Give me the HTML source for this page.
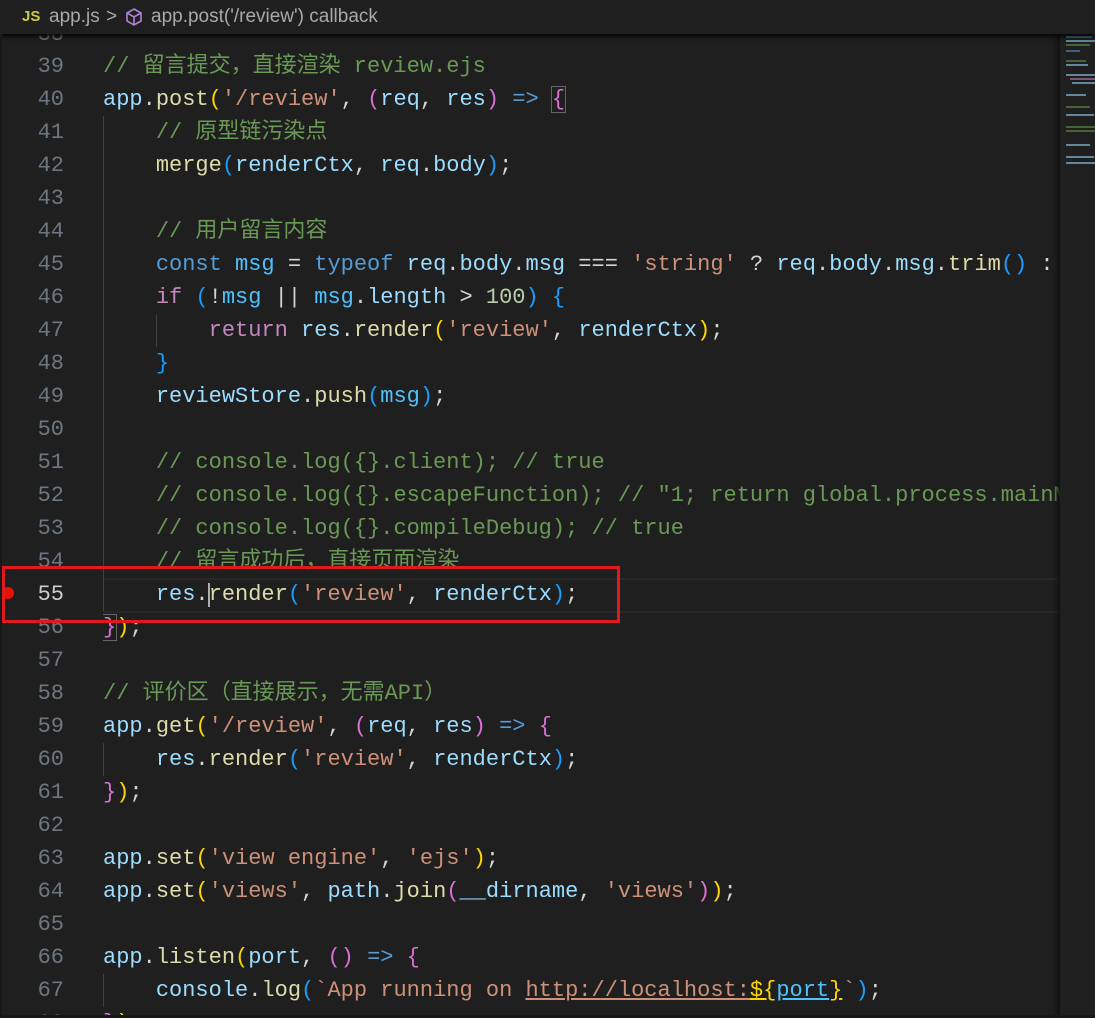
<!DOCTYPE html>
<html><head><meta charset="utf-8"><style>
html,body{margin:0;padding:0;background:#1f1f1f;width:1095px;height:1018px;overflow:hidden;}
body{position:relative;font-family:"Liberation Mono","Noto Sans CJK SC",monospace;}
.bc{position:absolute;left:0;top:0;width:1095px;height:34px;background:#1f1f1f;box-shadow:0 2px 5px #000;z-index:3;font-family:"Liberation Sans",sans-serif;font-size:19px;color:#a9a9a9;}
.bc span{position:absolute;top:6px;}
.w{position:absolute;left:0;top:2px;width:1095px;height:1016px;}
.ln{position:absolute;left:0;width:64px;text-align:right;font-size:22px;color:#6e7681;height:33px;line-height:33px;}
.cd{position:absolute;left:103px;font-size:22px;height:33px;line-height:33px;white-space:pre;color:#d4d4d4;width:957px;overflow:hidden;}
.c{color:#6a9955}.k{color:#569cd6}.p{color:#c586c0}.f{color:#dcdcaa}.v{color:#9cdcfe}.s{color:#ce9178}.n{color:#b5cea8}.o{color:#4fc1ff}
.b1{color:#ffd700}.b2{color:#da70d6}.b3{color:#179fff}
.g{position:absolute;width:1px;background:#404040;}
.mm{position:absolute;left:1060px;top:34px;width:35px;height:984px;background:#1f1f1f;box-shadow:-3px 0 5px #111;z-index:2}
</style></head><body>
<div class="bc"><span style="left:22px;top:8px;color:#cbcb41;font-weight:bold;font-size:15px">JS</span><span style="left:49px;">app.js</span><span style="left:106px;">&gt;</span>
<svg style="position:absolute;left:124px;top:7px" width="20" height="20" viewBox="0 0 20 20"><path d="M10 2 L17 6 L17 14 L10 18 L3 14 L3 6 Z M3 6 L10 10 L17 6 M10 10 L10 18" fill="none" stroke="#b180d7" stroke-width="1.6"/></svg>
<span style="left:151px;">app.post('/review') callback</span></div>
<div class="mm">
<svg width="35" height="140" style="position:absolute;left:6px;top:0"><g opacity="0.55"><rect x="0" y="2" width="26" height="2" fill="#569cd6"/><rect x="0" y="6" width="29" height="2" fill="#9cdcfe"/><rect x="0" y="10" width="24" height="2" fill="#6a9955"/><rect x="0" y="16" width="14" height="2" fill="#569cd6"/><rect x="0" y="26" width="20" height="2" fill="#6a9955"/><rect x="0" y="30" width="22" height="2" fill="#9cdcfe"/><rect x="0" y="40" width="29" height="2" fill="#9cdcfe"/><rect x="4" y="44" width="25" height="2" fill="#c586c0"/><rect x="6" y="48" width="23" height="2" fill="#9cdcfe"/><rect x="0" y="60" width="20" height="2" fill="#9cdcfe"/><rect x="0" y="72" width="24" height="2" fill="#6a9955"/><rect x="0" y="80" width="28" height="2" fill="#9cdcfe"/><rect x="0" y="92" width="29" height="2" fill="#6a9955"/><rect x="0" y="96" width="29" height="2" fill="#6a9955"/><rect x="0" y="110" width="24" height="2" fill="#9cdcfe"/><rect x="0" y="122" width="28" height="2" fill="#9cdcfe"/><rect x="0" y="128" width="29" height="2" fill="#9cdcfe"/></g></svg>
</div>
<div class="w">
<div class="ln" style="top:16px">38</div>
<div class="ln" style="top:48px">39</div><div class="cd" style="top:48px"><span class="c">// 留言提交，直接渲染 review.ejs</span></div>
<div class="ln" style="top:81px">40</div><div class="cd" style="top:81px"><span class="v">app</span>.<span class="f">post</span><span class="b1">(</span><span class="s">'/review'</span>, <span class="b2">(</span><span class="v">req</span>, <span class="v">res</span><span class="b2">)</span> <span class="k">=&gt;</span> <span class="b2" style="outline:1px solid #666">{</span></div>
<div class="ln" style="top:114px">41</div><div class="cd" style="top:114px">    <span class="c">// 原型链污染点</span></div>
<div class="ln" style="top:147px">42</div><div class="cd" style="top:147px">    <span class="f">merge</span><span class="b3">(</span><span class="v">renderCtx</span>, <span class="v">req</span>.<span class="v">body</span><span class="b3">)</span>;</div>
<div class="ln" style="top:180px">43</div>
<div class="ln" style="top:213px">44</div><div class="cd" style="top:213px">    <span class="c">// 用户留言内容</span></div>
<div class="ln" style="top:246px">45</div><div class="cd" style="top:246px">    <span class="k">const</span> <span class="o">msg</span> = <span class="k">typeof</span> <span class="v">req</span>.<span class="v">body</span>.<span class="v">msg</span> === <span class="s">'string'</span> ? <span class="v">req</span>.<span class="v">body</span>.<span class="v">msg</span>.<span class="f">trim</span><span class="b3">()</span> : <span class="s">''</span>;</div>
<div class="ln" style="top:279px">46</div><div class="cd" style="top:279px">    <span class="p">if</span> <span class="b3">(</span>!<span class="o">msg</span> || <span class="o">msg</span>.<span class="v">length</span> &gt; <span class="n">100</span><span class="b3">)</span> <span class="b3">{</span></div>
<div class="ln" style="top:312px">47</div><div class="cd" style="top:312px">        <span class="p">return</span> <span class="v">res</span>.<span class="f">render</span><span class="b1">(</span><span class="s">'review'</span>, <span class="v">renderCtx</span><span class="b1">)</span>;</div>
<div class="ln" style="top:345px">48</div><div class="cd" style="top:345px">    <span class="b3">}</span></div>
<div class="ln" style="top:378px">49</div><div class="cd" style="top:378px">    <span class="v">reviewStore</span>.<span class="f">push</span><span class="b3">(</span><span class="o">msg</span><span class="b3">)</span>;</div>
<div class="ln" style="top:411px">50</div>
<div class="ln" style="top:444px">51</div><div class="cd" style="top:444px">    <span class="c">// console.log({}.client); // true</span></div>
<div class="ln" style="top:477px">52</div><div class="cd" style="top:477px">    <span class="c">// console.log({}.escapeFunction); // "1; return global.process.mainModule</span></div>
<div class="ln" style="top:510px">53</div><div class="cd" style="top:510px">    <span class="c">// console.log({}.compileDebug); // true</span></div>
<div class="ln" style="top:543px">54</div><div class="cd" style="top:543px">    <span class="c">// 留言成功后，直接页面渲染</span></div>
<div style="position:absolute;left:103px;top:576px;width:957px;height:31px;border-top:2px solid #282828;border-bottom:2px solid #282828;"></div>
<div class="ln" style="top:576px;color:#cccccc">55</div><div class="cd" style="top:576px">    <span class="v">res</span>.<span class="f">render</span><span class="b3">(</span><span class="s">'review'</span>, <span class="v">renderCtx</span><span class="b3">)</span>;</div>
<div style="position:absolute;left:208px;top:581px;width:2px;height:24px;background:#aeafad"></div>
<div style="position:absolute;left:2px;top:585px;width:12px;height:12px;border-radius:50%;background:#e51400"></div>
<div class="ln" style="top:609px">56</div><div class="cd" style="top:609px"><span class="b2" style="outline:1px solid #666">}</span><span class="b1">)</span>;</div>
<div class="ln" style="top:642px">57</div>
<div class="ln" style="top:675px">58</div><div class="cd" style="top:675px"><span class="c">// 评价区（直接展示，无需API）</span></div>
<div class="ln" style="top:708px">59</div><div class="cd" style="top:708px"><span class="v">app</span>.<span class="f">get</span><span class="b1">(</span><span class="s">'/review'</span>, <span class="b2">(</span><span class="v">req</span>, <span class="v">res</span><span class="b2">)</span> <span class="k">=&gt;</span> <span class="b2">{</span></div>
<div class="ln" style="top:741px">60</div><div class="cd" style="top:741px">    <span class="v">res</span>.<span class="f">render</span><span class="b3">(</span><span class="s">'review'</span>, <span class="v">renderCtx</span><span class="b3">)</span>;</div>
<div class="ln" style="top:774px">61</div><div class="cd" style="top:774px"><span class="b2">}</span><span class="b1">)</span>;</div>
<div class="ln" style="top:807px">62</div>
<div class="ln" style="top:840px">63</div><div class="cd" style="top:840px"><span class="v">app</span>.<span class="f">set</span><span class="b1">(</span><span class="s">'view engine'</span>, <span class="s">'ejs'</span><span class="b1">)</span>;</div>
<div class="ln" style="top:873px">64</div><div class="cd" style="top:873px"><span class="v">app</span>.<span class="f">set</span><span class="b1">(</span><span class="s">'views'</span>, <span class="v">path</span>.<span class="f">join</span><span class="b2">(</span><span class="v">__dirname</span>, <span class="s">'views'</span><span class="b2">)</span><span class="b1">)</span>;</div>
<div class="ln" style="top:906px">65</div>
<div class="ln" style="top:939px">66</div><div class="cd" style="top:939px"><span class="v">app</span>.<span class="f">listen</span><span class="b1">(</span><span class="v">port</span>, <span class="b2">()</span> <span class="k">=&gt;</span> <span class="b2">{</span></div>
<div class="ln" style="top:972px">67</div><div class="cd" style="top:972px">    <span class="v">console</span>.<span class="f">log</span><span class="b3">(</span><span class="s">`App running on <u>http://localhost:</u></span><span class="k" style="color:#ffd700;text-decoration:underline">${</span><span class="v" style="color:#4fc1ff;text-decoration:underline">port</span><span style="color:#ffd700;text-decoration:underline">}</span><span class="s">`</span><span class="b3">)</span>;</div>
<div class="ln" style="top:1005px">68</div><div class="cd" style="top:1005px"><span class="b2">}</span><span class="b1">)</span>;</div>

<div class="g" style="left:103px;top:114px;height:495px"></div>
<div class="g" style="left:156px;top:312px;height:33px"></div>
<div class="g" style="left:103px;top:741px;height:33px"></div>
<div class="g" style="left:103px;top:972px;height:33px"></div>
</div>
<div style="position:absolute;left:2px;top:566px;width:612px;height:51px;border:3px solid #e0191d;z-index:2"></div>
<div style="position:absolute;left:0;top:1015px;width:1095px;height:3px;background:#181818;z-index:3"></div>
<div style="position:absolute;left:0;top:34px;width:2px;height:984px;background:#181818;z-index:3"></div>
</body></html>
